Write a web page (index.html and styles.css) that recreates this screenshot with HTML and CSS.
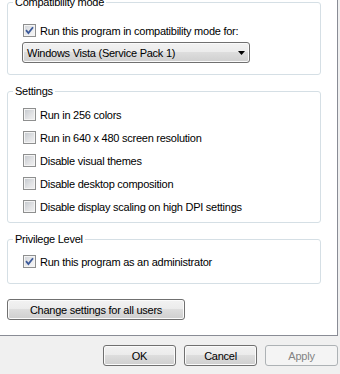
FILE: index.html
```html
<!DOCTYPE html>
<html>
<head>
<meta charset="utf-8">
<link rel="stylesheet" href="styles.css">
</head>
<body>
<div class="panel">
  <fieldset class="group g-compat">
    <legend>Compatibility mode</legend>
    <div class="row">
      <span class="cb checked"><svg width="11" height="11" viewBox="0 0 11 11"><polyline points="2,5.2 4.4,8 9,2.2" fill="none" stroke="#3c5a9a" stroke-width="1.8"/></svg></span>
      <span>Run this program in compatibility mode for:</span>
    </div>
    <div class="select">
      <span>Windows Vista (Service Pack 1)</span>
      <svg width="7" height="4" viewBox="0 0 7 4"><polygon points="0,0 7,0 3.5,4" fill="#000"/></svg>
    </div>
  </fieldset>

  <fieldset class="group g-settings">
    <legend>Settings</legend>
    <div class="row"><span class="cb"></span><span>Run in 256 colors</span></div>
    <div class="row"><span class="cb"></span><span>Run in 640 x 480 screen resolution</span></div>
    <div class="row"><span class="cb"></span><span>Disable visual themes</span></div>
    <div class="row"><span class="cb"></span><span>Disable desktop composition</span></div>
    <div class="row"><span class="cb"></span><span>Disable display scaling on high DPI settings</span></div>
  </fieldset>

  <fieldset class="group g-priv">
    <legend>Privilege Level</legend>
    <div class="row">
      <span class="cb checked"><svg width="11" height="11" viewBox="0 0 11 11"><polyline points="2,5.2 4.4,8 9,2.2" fill="none" stroke="#3c5a9a" stroke-width="1.8"/></svg></span>
      <span>Run this program as an administrator</span>
    </div>
  </fieldset>

  <button class="btn wide">Change settings for all users</button>
</div>
<div class="footer">
  <button class="btn">OK</button>
  <button class="btn">Cancel</button>
  <button class="btn disabled">Apply</button>
</div>
</body>
</html>
```

FILE: styles.css
```css
html, body {
  margin: 0;
  padding: 0;
}
body {
  background: #f0f0f0;
  font-family: "Liberation Sans", Arial, sans-serif;
  font-size: 11px;
  letter-spacing: -0.25px;
  color: #000;
  width: 340px;
  height: 374px;
  overflow: hidden;
}
.panel {
  width: 337px;
  background: #fff;
  border-right: 1px solid #898c95;
  border-bottom: 1px solid #898c95;
  padding: 0 0 15px 7px;
  box-sizing: border-box;
  width: 338px;
}
.group {
  width: 314px;
  box-sizing: border-box;
  margin: 10px 0 0 0;
  border: 1px solid #d5dfe5;
  border-radius: 3px;
  padding: 0 0 0 5px;
  min-width: 0;
}
.group legend {
  padding: 0 2px;
  line-height: 13px;
  height: 13px;
}
.g-compat {
  margin-top: -4px;
  padding-top: 10px;
  padding-bottom: 11px;
}
.g-settings {
  padding-top: 5px;
  padding-bottom: 4px;
}
.g-priv {
  padding-top: 4px;
  padding-bottom: 10px;
}
.row {
  display: flex;
  align-items: center;
  height: 23px;
  margin-left: 10px;
  gap: 4px;
  white-space: nowrap;
}
.cb {
  width: 13px;
  height: 13px;
  box-sizing: border-box;
  border: 1px solid #8e8f8f;
  background: #f4f4f4;
  position: relative;
  flex: none;
  display: flex;
  align-items: center;
  justify-content: center;
}
.cb::before {
  content: "";
  position: absolute;
  left: 1px;
  top: 1px;
  width: 9px;
  height: 9px;
  background: linear-gradient(135deg, #c7cbd0 0%, #e2e3e5 60%, #eeeeef 100%);
}
.cb.checked::before {
  background: linear-gradient(135deg, #d3d6da 0%, #ebecee 60%, #f4f4f5 100%);
}
.cb svg {
  position: relative;
  display: block;
}
.select {
  margin-left: 9px;
  width: 228px;
  height: 21px;
  box-sizing: border-box;
  border: 1px solid #707070;
  border-radius: 3px;
  background: linear-gradient(#f2f2f2 0%, #ebebeb 50%, #dddddd 50%, #cfcfcf 100%);
  box-shadow: inset 0 0 0 1px #fafafa;
  display: flex;
  align-items: center;
  justify-content: space-between;
  padding: 0 4px 0 4px;
  white-space: nowrap;
}
.select svg {
  display: block;
}
.btn {
  font-family: "Liberation Sans", Arial, sans-serif;
  font-size: 11px;
  letter-spacing: -0.25px;
  color: #000;
  height: 21px;
  width: 73px;
  padding: 0;
  box-sizing: border-box;
  border: 1px solid #707070;
  border-radius: 3px;
  background: linear-gradient(#f2f2f2 0%, #ebebeb 50%, #dddddd 50%, #cfcfcf 100%);
  box-shadow: inset 0 0 0 1px #fbfbfb;
  display: block;
}
.btn.wide {
  width: 178px;
  margin-top: 15px;
}
.btn.disabled {
  border-color: #adb2b5;
  background: #f4f4f4;
  box-shadow: none;
  color: #838383;
}
.footer {
  display: flex;
  justify-content: flex-end;
  gap: 8px;
  padding: 9px 2px 0 0;
}
```
